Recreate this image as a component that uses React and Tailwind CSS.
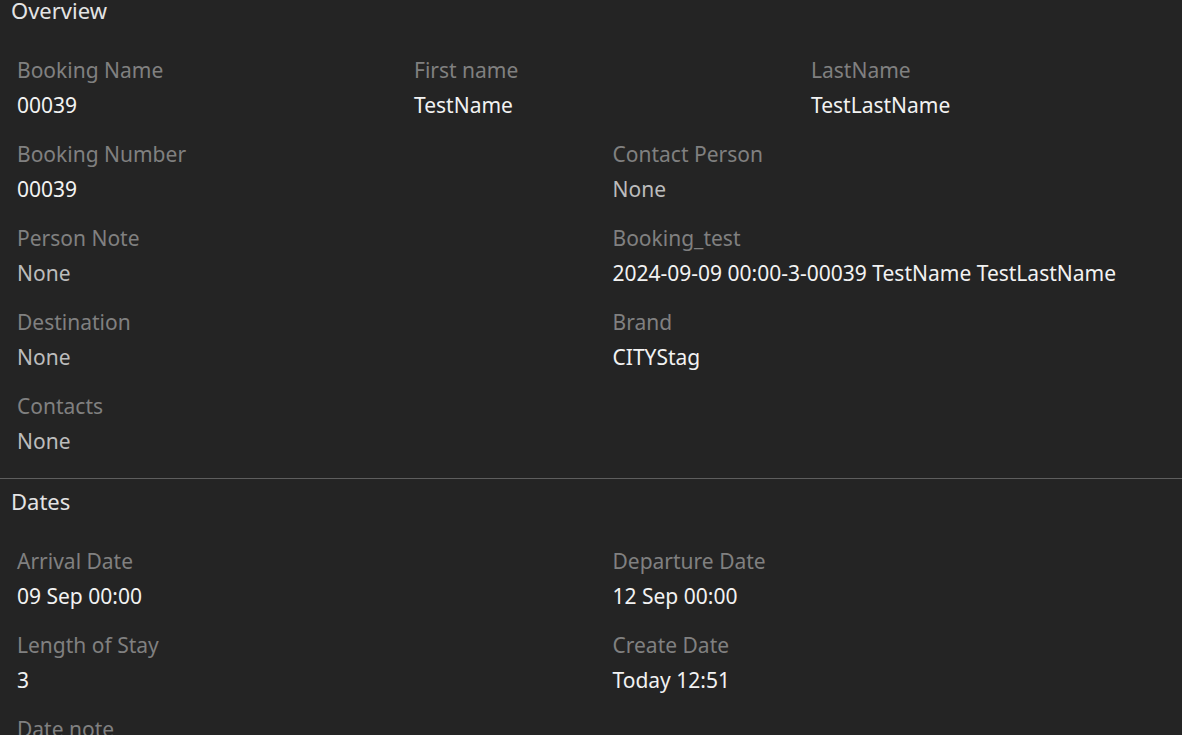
const overview = [
  { cols: 3, items: [["Booking Name", "00039"], ["First name", "TestName"], ["LastName", "TestLastName"]] },
  { cols: 2, items: [["Booking Number", "00039"], ["Contact Person", "None", true]] },
  { cols: 2, items: [["Person Note", "None", true], ["Booking_test", "2024-09-09 00:00-3-00039 TestName TestLastName"]] },
  { cols: 2, items: [["Destination", "None", true], ["Brand", "CITYStag"]] },
  { cols: 2, items: [["Contacts", "None", true]] },
];

const dates = [
  { cols: 2, items: [["Arrival Date", "09 Sep 00:00"], ["Departure Date", "12 Sep 00:00"]] },
  { cols: 2, items: [["Length of Stay", "3"], ["Create Date", "Today 12:51"]] },
  { cols: 2, items: [["Date note", "None", true]] },
];

function Field({ label, value, muted }) {
  return (
    <div className="px-[6px] pb-[21px]">
      <div className="h-[28px] leading-[28px] text-[#808080]">{label}</div>
      <div className={`mt-[7px] h-[28px] leading-[28px] whitespace-nowrap ${muted ? "text-[#bcbcbc]" : "text-[#f2f2f2]"}`}>
        {value}
      </div>
    </div>
  );
}

function Section({ title, rows, first }) {
  return (
    <section className={first ? "-mt-[12px] pb-[2px] border-b border-[#5e5e5e]" : "pb-[2px]"}>
      <h2 className="px-[11px] pt-[8px] h-[37px] leading-[28px] text-[22px] text-[#e4e4e4]">{title}</h2>
      <div className="mt-[31px] ml-[11px] w-[1191px]">
        {rows.map((row, i) => (
          <div key={i} className={row.cols === 3 ? "grid grid-cols-3" : "grid grid-cols-2"}>
            {row.items.map(([l, v, m]) => (
              <Field key={l} label={l} value={v} muted={m} />
            ))}
          </div>
        ))}
      </div>
    </section>
  );
}

export default function App() {
  return (
    <div className="h-[735px] w-[1182px] overflow-hidden bg-[#242424] text-[21px] font-['Noto_Sans',sans-serif]">
      <Section title="Overview" rows={overview} first />
      <Section title="Dates" rows={dates} />
    </div>
  );
}
